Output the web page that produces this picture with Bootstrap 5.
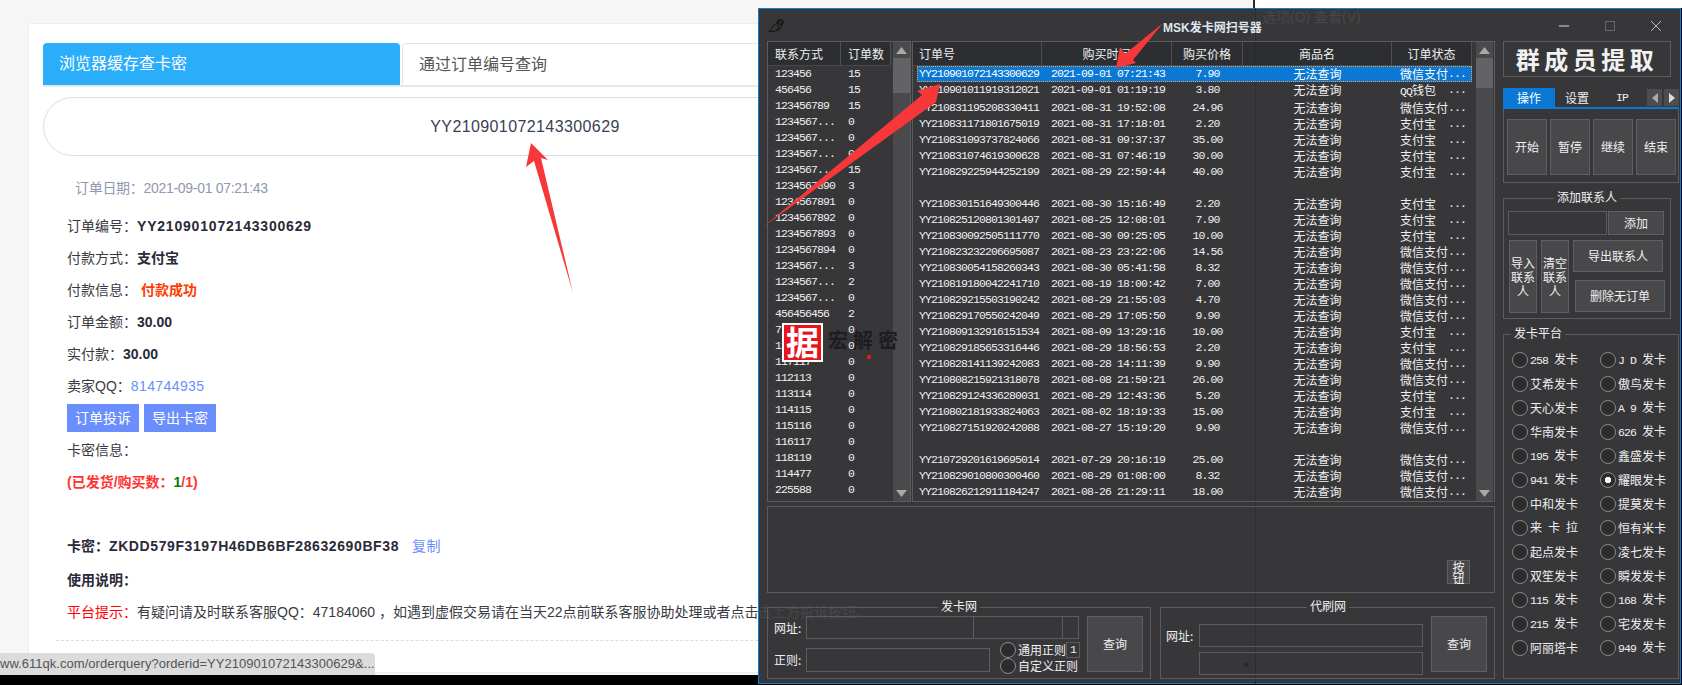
<!DOCTYPE html>
<html lang="zh-CN">
<head>
    <meta charset="UTF-8">
    <title>MSK发卡网扫号器</title>
    <link href="https://cdn.jsdelivr.net/npm/bootstrap@5.3.0/dist/css/bootstrap.min.css" rel="stylesheet">
    <style>
        html, body { margin: 0; height: 685px; overflow: hidden; background: #000; }
        .desk { position: relative; width: 1682px; height: 685px; display: flex; overflow: hidden; }

        /* browser page on the left */
        .web { position: relative; width: 758px; height: 675px; flex: none; overflow: hidden; background: #f6f6f6;
               font: 14px "Liberation Sans", "Noto Sans CJK SC", sans-serif; color: #3a3a44; }
        .web-card { width: 1100px; height: 650px; margin: 23px 0 0 28px; padding: 19px 14px 0; background: #fff;
                    border: 1px solid #eee; border-radius: 4px 0 0 0; }
        .web-tab { height: 42px; line-height: 42px; font-size: 16px; padding-left: 16px; border-radius: 4px 4px 0 0; }
        .web-tab-on { width: 357px; background: #2baefa; color: #fff; }
        .web-tab-off { flex: 1; background: #fff; color: #555; border: 1px solid #e4e4e8; border-bottom: 0; }
        .web-tabs { gap: 2px; border-bottom: 2px solid #e6e8ee; margin-right: 100px; }
        .order-input { width: 964px; height: 59px; margin-top: 10px; padding-top: 6px; border: 1px solid #dcdcec; border-radius: 30px;
                       font-size: 16px; letter-spacing: .4px; color: #3a3f55; }
        .web-date { line-height: 32px; margin: 16px 0 6px 32px; color: #9097b0; letter-spacing: -.3px; }
        .web-row { line-height: 32px; margin-left: 24px; white-space: nowrap; }
        .web-row b { color: #2a2a38; }
        .spaced { letter-spacing: .8px; }
        .qq-num { color: #6a8efc; letter-spacing: .4px; }
        .web-row b.paid { color: #ff3c00; margin-left: 4px; }
        .web-row b.sent { color: #f33; }
        .sent i { font-style: normal; color: #0a7a0a; }
        .hint-red { color: #f00; }
        .key-txt { letter-spacing: .6px; }
        .copy-link { margin-left: 13px; }
        .act-row { line-height: normal; height: 28px; margin-top: 2px; margin-bottom: 2px; }
        .act-btn { height: 28px; width: 72px; padding: 0; margin-right: 1px; font-size: 14px; line-height: 28px; color: #fff; background: #6a8efc; border: 0; border-radius: 0; }
        .web-gap { height: 32px; }
        .web-row-gap { margin-top: 2px; }
        .web-dash { border-top: 1px dashed #ddd; margin: 12px 0 0 13px; }
        .status-tip { position: absolute; left: 0; bottom: 0; width: 375px; height: 22px; line-height: 22px; font-size: 13px; letter-spacing: .03px;
                      color: #555; background: #dcdcdc; border-radius: 0 4px 0 0; white-space: nowrap; overflow: hidden; }

        /* right side of the desktop */
        .back { flex: 1; display: flex; flex-direction: column; }
        .back-top { height: 8px; display: flex; flex: none; }
        .back-top div:first-child { width: 497px; background: #f6f6f6; border-right: 2px solid #2d2d2f; }
        .back-top div:last-child { flex: 1; background: #fff; }

        /* scanner window */
        .win { width: 923px; height: 676px; background: #37373a; border: 1px solid #0b7fd4;
               font: 12px/14px "Noto Sans CJK SC", "Liberation Sans", sans-serif; color: #f0f0f0; }
        .lat { font-family: "Liberation Mono", monospace; font-size: 11.5px; letter-spacing: -.9px; }
        .win-title, .win-body { position: relative; z-index: 2; }
        .win-title { height: 32px; padding-left: 9px; }
        .win-name { margin-left: 378px; font-weight: 700; font-family: "Liberation Sans", "Noto Sans CJK SC", sans-serif; color: #dfe6ee; padding-top: 5px; }
        .win-ctl { margin-left: auto; padding-right: 19px; gap: 36px; padding-top: 2px; }
        .win-body { padding-left: 8px; gap: 8px; }
        .win-left { width: 728px; flex: none; }
        .win-right { width: 176px; flex: none; }

        .grid-box { height: 461px; gap: 1px; }
        .lst { border: 1px solid #5c5c5e; height: 461px; overflow: hidden; }
        .lst-a { width: 144px; flex: none; }
        .lst-b { flex: 1; }
        .cols { display: grid; line-height: 16px; white-space: nowrap; }
        .cols-a { grid-template-columns: 73px 50px; }
        .cols-a > span { padding-left: 7px; }
        .cols-b { grid-template-columns: 125px 130px 71px 149px 80px; margin-left: 4px; }
        .hdr { height: 24px; line-height: 23px; background: rgba(38, 40, 43, .6); border-bottom: 1px solid #47474a; }
        .hdr > span { border-right: 1px solid #4f4f52; }
        .lst-hdr-b { grid-template-columns: 129px 130px 71px 149px 80px; }
        .lst-hdr-b > span:first-child { padding-left: 6px; }
        .sel-row { background: #0a78d4; outline: 1px dotted #f0a040; outline-offset: -1px; color: #fff; }
        .c-id { padding-left: 2px; }
        .c-date { padding-left: 9px; }
        .c-mid { text-align: center; }
        .c-pay { padding-left: 8px; display: flex; }
        .c-pay span:first-child { width: 48px; flex: none; }
        .sb { width: 17px; flex: none; height: 459px; background: #4a4a4d; }
        .sb svg { display: block; margin: 5px auto 4px; }
        .sb-thumb { height: 35px; background: #636366; }
        .sb-thumb-b { height: 30px; }
        .sb-gap-a { margin-left: 2px; }
        .sb-gap-b { margin-left: 4px; margin-right: 1px; }
        .sb svg.sb-down { margin: auto auto 4px; }

        .log-box { height: 87px; margin-top: 4px; border: 1px solid #5c5c5e; padding: 0 24px 8px 0; }
        .wbtn { padding: 0; font-size: 12px; line-height: 14px; color: #f0f0f0; background: #48484b; border: 1px solid #5f5f62; border-radius: 0; }
        .wbtn:hover { color: #fff; background: #48484b; border-color: #5f5f62; }
        .log-btn { width: 23px; height: 24px; line-height: 11px; }
        .grp { position: relative; border: 1px solid #5c5c5e; }
        .grp-name { position: absolute; top: -9px; padding: 0 3px; background: #37373a; line-height: 14px; transform: translateX(-50%); white-space: nowrap; }
        .grp-row { margin-top: 14px; gap: 9px; }
        .grp-card { width: 384px; height: 72px; padding: 8px 7px 0 6px; }
        .grp-card .grp-name { left: 191px; }
        .card-fields { min-width: 0; }
        .grp-pay { flex: 1; height: 72px; padding: 8px 7px 0 5px; }
        .grp-pay .grp-name { left: 167px; }
        .w-inp { height: 23px; background: transparent; border: 1px solid #5c5c5e; }
        .lbl { width: 32px; flex: none; }
        .q-btn { width: 56px; height: 56px; flex: none; margin-left: 8px; }
        .rdo { width: 16px; height: 16px; flex: none; border-radius: 50%; border: 1px solid #8a8a8a; background: #2c2c2e; }
        .rdo-on { background: radial-gradient(circle, #f4f4f4 0 3px, #2c2c2e 3.5px); }
        .rdo-line { height: 16px; gap: 2px; white-space: nowrap; }
        .num-box { width: 14px; height: 16px; margin-left: -2px; line-height: 14px; border: 1px solid #5c5c5e; text-align: center; }
        .w-drop { position: relative; }
        .w-drop svg { position: absolute; right: 172px; top: 10px; }
        .card-a { width: 168px; }
        .card-b { width: 90px; margin-left: -1px; }
        .card-c { width: 17px; margin-left: -1px; }
        .reg-row { margin-top: 9px; }
        .reg-lbl { line-height: 24px; }
        .reg-inp { width: 184px; height: 24px; flex: none; }
        .reg-opts { margin: -6px 0 0 10px; }
        .pay-fields { padding-top: 8px; }
        .pay-lbl { width: 33px; }
        .pay-sel { margin-top: 5px; }

        .banner { width: 168px; height: 36px; border: 1px solid #5c5c5e; line-height: 33px; text-align: center; font-size: 24px; font-weight: 700; letter-spacing: 4.5px; color: #f2f2f2; }
        .rtabs { height: 21px; margin-top: 11px; border-bottom: 2px solid #0a78d4; }
        .rtab { width: 52px; line-height: 19px; text-align: center; }
        .rtab-on { background: #0a78d4; color: #fff; }
        .rtab-plain { width: 44px; }
        .rtab-ip { width: 46px; }
        .rarrow { width: 15px; height: 17px; margin: 1px 0 0 2px; background: #4d4d50; }
        .rpane { height: 74px; padding: 10px 2px 0 3px; border: 1px solid #5c5c5e; border-top: 0; gap: 3px; }
        .rpane .wbtn { width: 40px; height: 56px; }
        .grp-add { width: 168px; height: 121px; margin-top: 15px; padding: 12px 0 0 4px; }
        .grp-add .grp-name { left: 83px; }
        .add-inp { width: 99px; height: 24px; }
        .add-btn { width: 56px; height: 24px; margin-left: 1px; }
        .add-tools { margin: 5px 0 0 1px; }
        .tall-btn { width: 28px; height: 73px; margin-right: 4px; }
        .wide-btn { width: 90px; height: 32px; }
        .del-btn { margin: 8px 0 0 2px; }
        .grp-plat { height: 345px; margin-top: 15px; padding: 13px 0 0 8px; }
        .grp-plat .grp-name { left: 7px; transform: none; }
        .plat-grid { display: grid; grid-template-columns: 88px 88px; grid-auto-rows: 24px; align-items: center; }

        /* things seen through the translucent window, and the marks drawn over the shot */
        .ghost { position: absolute; z-index: 1; color: #474749; white-space: nowrap; font: 14px "Liberation Sans", "Noto Sans CJK SC", sans-serif; line-height: 16px; }
        .ghost-line { position: absolute; z-index: 1; left: 1255px; top: 8px; width: 1px; height: 676px; background: #2d2d2f; }
        .marks { position: absolute; left: 0; top: 0; z-index: 5; pointer-events: none; }
        .seal { position: absolute; z-index: 4; left: 782px; top: 323px; width: 41px; height: 39px; background: #e8141c; border: 2px solid #fff; color: #fff;
                font: 700 33px/33px "Noto Sans CJK SC", sans-serif; text-align: center; overflow: hidden; }
        .seal-name { position: absolute; z-index: 4; left: 828px; top: 328px; font: 700 20px/24px "Noto Sans CJK SC", sans-serif; letter-spacing: 5px; color: #1d1d1f; white-space: nowrap; }
        .seal-dot { position: absolute; z-index: 4; left: 867px; top: 355px; width: 4px; height: 4px; background: #e8141c; }
    </style>
</head>
<body>
<div class="desk" id="desk">

    <div class="web">
        <div class="web-card">
            <div class="d-flex web-tabs">
                <div class="web-tab web-tab-on">浏览器缓存查卡密</div>
                <div class="web-tab web-tab-off">通过订单编号查询</div>
            </div>
            <input class="form-control text-center order-input" type="text" value="YY210901072143300629">
            <div class="web-date">订单日期：2021-09-01 07:21:43</div>
            <div class="web-row">订单编号：<b class="spaced">YY210901072143300629</b></div>
            <div class="web-row">付款方式：<b>支付宝</b></div>
            <div class="web-row">付款信息：<b class="paid">付款成功</b></div>
            <div class="web-row">订单金额：<b>30.00</b></div>
            <div class="web-row">实付款：<b>30.00</b></div>
            <div class="web-row">卖家QQ：<span class="qq-num">814744935</span></div>
            <div class="web-row d-flex gap-1 act-row">
                <button class="btn act-btn" type="button">订单投诉</button>
                <button class="btn act-btn" type="button">导出卡密</button>
            </div>
            <div class="web-row">卡密信息：</div>
            <div class="web-row"><b class="sent">(已发货/购买数：<i>1</i>/1)</b></div>
            <div class="web-gap"></div>
            <div class="web-row"><b>卡密：<span class="key-txt">ZKDD579F3197H46DB6BF28632690BF38</span></b><a class="qq-num text-decoration-none copy-link" href="#">复制</a></div>
            <div class="web-row web-row-gap"><b>使用说明：</b></div>
            <div class="web-row"><span class="hint-red">平台提示：</span>有疑问请及时联系客服QQ：47184060 ，如遇到虚假交易请在当天22点前联系客服协助处理或者点击上方投诉按钮。</div>
            <div class="web-dash"></div>
        </div>
        <div class="status-tip">ww.611qk.com/orderquery?orderid=YY210901072143300629&amp;...</div>
    </div>

    <div class="back">
        <div class="back-top"><div></div><div></div></div>
        <div class="win">
            <div class="win-title d-flex align-items-center">
                <svg width="17" height="15" viewBox="0 0 17 15" fill="none" stroke="#111" stroke-width="1"><path d="M1 14 L6 7 L9 5 M1 14 L7 13 L12 11 L14 7 L13 3 L10 2 L9 5 L11 9 L8 13"/><circle cx="13" cy="4" r="2.5"/></svg>
                <div class="win-name">MSK发卡网扫号器</div>
                <div class="win-ctl d-flex align-items-center">
                    <svg width="10" height="10" viewBox="0 0 10 10"><path d="M0 5 H10" stroke="#ddd"/></svg>
                    <svg width="10" height="10" viewBox="0 0 10 10"><rect x=".5" y=".5" width="9" height="9" fill="none" stroke="#68686b"/></svg>
                    <svg width="10" height="10" viewBox="0 0 10 10"><path d="M0 0 L10 10 M10 0 L0 10" stroke="#bbb"/></svg>
                </div>
            </div>

            <div class="win-body d-flex">
                <div class="win-left">
                    <div class="grid-box d-flex">
                        <div class="lst lst-a d-flex">
                            <div class="flex-grow-1">
                                <div class="cols cols-a hdr"><span>联系方式</span><span>订单数</span></div>
                                <div id="contactRows"></div>
                            </div>
                            <div class="sb sb-gap-a d-flex flex-column">
                                <svg width="11" height="7" viewBox="0 0 11 7"><path d="M5.5 0 L11 7 H0 Z" fill="#a8a8a8"/></svg>
                                <div class="sb-thumb"></div>
                                <svg class="sb-down" width="11" height="7" viewBox="0 0 11 7"><path d="M0 0 H11 L5.5 7 Z" fill="#a8a8a8"/></svg>
                            </div>
                        </div>
                        <div class="lst lst-b d-flex">
                            <div class="flex-grow-1">
                                <div class="cols lst-hdr-b hdr">
                                    <span>订单号</span><span class="c-mid">购买时间</span><span class="c-mid">购买价格</span><span class="c-mid">商品名</span><span class="c-mid">订单状态</span>
                                </div>
                                <div id="orderRows"></div>
                            </div>
                            <div class="sb sb-gap-b d-flex flex-column">
                                <svg width="11" height="7" viewBox="0 0 11 7"><path d="M5.5 0 L11 7 H0 Z" fill="#a8a8a8"/></svg>
                                <div class="sb-thumb sb-thumb-b"></div>
                                <svg class="sb-down" width="11" height="7" viewBox="0 0 11 7"><path d="M0 0 H11 L5.5 7 Z" fill="#a8a8a8"/></svg>
                            </div>
                        </div>
                    </div>

                    <div class="log-box d-flex justify-content-end align-items-end">
                        <button class="btn wbtn log-btn" type="button">按钮</button>
                    </div>

                    <div class="grp-row d-flex">
                        <div class="grp grp-card d-flex">
                            <div class="grp-name">发卡网</div>
                            <div class="flex-grow-1 card-fields">
                                <div class="d-flex align-items-center">
                                    <span class="lbl">网址:</span>
                                    <div class="w-inp card-a"></div><div class="w-inp card-b"></div><div class="w-inp card-c"></div>
                                </div>
                                <div class="d-flex reg-row">
                                    <span class="lbl reg-lbl">正则:</span>
                                    <div class="w-inp reg-inp"></div>
                                    <div class="reg-opts">
                                        <div class="rdo-line d-flex align-items-center"><span class="rdo"></span><span>通用正则</span><span class="num-box lat">1</span></div>
                                        <div class="rdo-line d-flex align-items-center"><span class="rdo"></span><span>自定义正则</span></div>
                                    </div>
                                </div>
                            </div>
                            <button class="btn wbtn q-btn" type="button">查询</button>
                        </div>
                        <div class="grp grp-pay d-flex">
                            <div class="grp-name">代刷网</div>
                            <div class="flex-grow-1 pay-fields">
                                <div class="d-flex align-items-center">
                                    <span class="lbl pay-lbl">网址:</span>
                                    <div class="w-inp flex-grow-1"></div>
                                </div>
                                <div class="d-flex pay-sel">
                                    <span class="lbl pay-lbl"></span>
                                    <div class="w-inp w-drop flex-grow-1"><svg width="7" height="5" viewBox="0 0 7 5"><path d="M0 0 H7 L3.5 5 Z" fill="#2b2b2d"/></svg></div>
                                </div>
                            </div>
                            <button class="btn wbtn q-btn" type="button">查询</button>
                        </div>
                    </div>
                </div>

                <div class="win-right">
                    <div class="banner">群成员提取</div>
                    <div class="rtabs d-flex">
                        <div class="rtab rtab-on">操作</div>
                        <div class="rtab rtab-plain">设置</div>
                        <div class="rtab rtab-ip lat">IP</div>
                        <div class="rarrow d-flex align-items-center justify-content-center"><svg width="6" height="10" viewBox="0 0 6 10"><path d="M6 0 V10 L0 5 Z" fill="#aaa"/></svg></div>
                        <div class="rarrow d-flex align-items-center justify-content-center"><svg width="6" height="10" viewBox="0 0 6 10"><path d="M0 0 V10 L6 5 Z" fill="#ddd"/></svg></div>
                    </div>
                    <div class="rpane d-flex">
                        <button class="btn wbtn" type="button">开始</button>
                        <button class="btn wbtn" type="button">暂停</button>
                        <button class="btn wbtn" type="button">继续</button>
                        <button class="btn wbtn" type="button">结束</button>
                    </div>
                    <div class="grp grp-add">
                        <div class="grp-name">添加联系人</div>
                        <div class="d-flex">
                            <div class="w-inp add-inp"></div>
                            <button class="btn wbtn add-btn" type="button">添加</button>
                        </div>
                        <div class="d-flex add-tools">
                            <button class="btn wbtn tall-btn" type="button">导入联系人</button>
                            <button class="btn wbtn tall-btn" type="button">清空联系人</button>
                            <div>
                                <button class="btn wbtn wide-btn d-block" type="button">导出联系人</button>
                                <button class="btn wbtn wide-btn d-block del-btn" type="button">删除无订单</button>
                            </div>
                        </div>
                    </div>
                    <div class="grp grp-plat">
                        <div class="grp-name">发卡平台</div>
                        <div class="plat-grid" id="platGrid"></div>
                    </div>
                </div>
            </div>
        </div>
    </div>

    <div class="ghost-line"></div>
    <div class="seal">据</div>
    <div class="seal-name">宏解密</div>
    <div class="seal-dot"></div>

    <svg class="marks" width="1682" height="685" viewBox="0 0 1682 685">
        <polygon fill="#f8373a" points="531,143 526,167 534,161 573,293 541,158 548,160"/>
        <polygon fill="#f8373a" points="1116,68 1120,48 1125,54 1163,23 1133,60 1136,63"/>
        <polygon fill="#f8373a" points="940,84 917,91 922,95 763,227 932,105 936,102"/>
    </svg>
</div>

<script>
    const contacts = [
        ['123456', 15], ['456456', 15], ['123456789', 15], ['1234567...', 0], ['1234567...', 0], ['1234567...', 0],
        ['1234567...', 15], ['1234567890', 3], ['1234567891', 0], ['1234567892', 0], ['1234567893', 0], ['1234567894', 0],
        ['1234567...', 3], ['1234567...', 2], ['1234567...', 0], ['456456456', 2], ['778899', 0], ['110110', 0],
        ['117117', 0], ['112113', 0], ['113114', 0], ['114115', 0], ['115116', 0], ['116117', 0],
        ['118119', 0], ['114477', 0], ['225588', 0]
    ];
    const WX = '微信支付', ZFB = '支付宝', QQ = 'QQ钱包';
    const orders = [
        ['YY210901072143300629', '2021-09-01 07:21:43', '7.90', WX],
        ['YY210901011919312021', '2021-09-01 01:19:19', '3.80', QQ],
        ['YY210831195208330411', '2021-08-31 19:52:08', '24.96', WX],
        ['YY210831171801675019', '2021-08-31 17:18:01', '2.20', ZFB],
        ['YY210831093737824066', '2021-08-31 09:37:37', '35.00', ZFB],
        ['YY210831074619300628', '2021-08-31 07:46:19', '30.00', ZFB],
        ['YY210829225944252199', '2021-08-29 22:59:44', '40.00', ZFB],
        null,
        ['YY210830151649300446', '2021-08-30 15:16:49', '2.20', ZFB],
        ['YY210825120801301497', '2021-08-25 12:08:01', '7.90', ZFB],
        ['YY210830092505111770', '2021-08-30 09:25:05', '10.00', ZFB],
        ['YY210823232206695087', '2021-08-23 23:22:06', '14.56', WX],
        ['YY210830054158260343', '2021-08-30 05:41:58', '8.32', WX],
        ['YY210819180042241710', '2021-08-19 18:00:42', '7.00', WX],
        ['YY210829215503190242', '2021-08-29 21:55:03', '4.70', WX],
        ['YY210829170550242049', '2021-08-29 17:05:50', '9.90', WX],
        ['YY210809132916151534', '2021-08-09 13:29:16', '10.00', ZFB],
        ['YY210829185653316446', '2021-08-29 18:56:53', '2.20', ZFB],
        ['YY210828141139242083', '2021-08-28 14:11:39', '9.90', WX],
        ['YY210808215921318078', '2021-08-08 21:59:21', '26.00', WX],
        ['YY210829124336280031', '2021-08-29 12:43:36', '5.20', ZFB],
        ['YY210802181933824063', '2021-08-02 18:19:33', '15.00', ZFB],
        ['YY210827151920242088', '2021-08-27 15:19:20', '9.90', WX],
        null,
        ['YY210729201619695014', '2021-07-29 20:16:19', '25.00', WX],
        ['YY210829010800300460', '2021-08-29 01:08:00', '8.32', WX],
        ['YY210826212911184247', '2021-08-26 21:29:11', '18.00', WX]
    ];
    const platforms = [
        '258 发卡', 'J D 发卡', '艾希发卡', '傲鸟发卡', '天心发卡', 'A 9 发卡', '华南发卡', '626 发卡',
        '195 发卡', '鑫盛发卡', '941 发卡', '耀眼发卡', '中和发卡', '提莫发卡', '来 卡 拉', '恒有米卡',
        '起点发卡', '凌七发卡', '双笙发卡', '瞬发发卡', '115 发卡', '168 发卡', '215 发卡', '宅发发卡',
        '阿丽塔卡', '949 发卡'
    ];
    // text of the window behind, showing through in gaps of this one
    const ghosts = [
        [1262, 9, '选项(O)   查看(V)'],
        [758, 604, '击上方投诉按钮。']
    ];

    // ascii runs in the window's lists use the half width mono font
    function lat(text) {
        return text.replace(/[\x20-\x7e]+/g, m => `<span class="lat">${m}</span>`);
    }

    document.getElementById('contactRows').innerHTML = contacts
        .map(([name, count]) => `<div class="cols cols-a"><span class="lat">${name}</span><span class="lat">${count}</span></div>`)
        .join('');

    const orderRow = (o, i) => {
        if (!o) return '<div class="cols cols-b">&nbsp;</div>';
        return `<div class="cols cols-b ${i === 0 ? 'sel-row' : ''}">
            <span class="c-id lat">${o[0]}</span>
            <span class="c-date lat">${o[1].replace(' ', '&nbsp;')}</span>
            <span class="c-mid lat">${o[2]}</span>
            <span class="c-mid">无法查询</span>
            <span class="c-pay"><span>${lat(o[3])}</span><span class="lat">...</span></span>
        </div>`;
    };
    document.getElementById('orderRows').innerHTML = orders.map(orderRow).join('') +
        '<div class="cols cols-b"><span></span><span></span><span></span><span class="c-mid">无法查询</span><span class="c-pay"><span>微信支付</span><span class="lat">...</span></span></div>';

    document.getElementById('platGrid').innerHTML = platforms
        .map(p => `<div class="rdo-line d-flex align-items-center"><span class="rdo ${p === '耀眼发卡' ? 'rdo-on' : ''}"></span><span class="plat-name">${lat(p)}</span></div>`)
        .join('');

    const desk = document.getElementById('desk');
    ghosts.forEach(([x, y, text]) => {
        const el = document.createElement('div');
        el.className = 'ghost';
        el.setAttribute('aria-hidden', 'true');
        el.style.left = x + 'px';
        el.style.top = y + 'px';
        el.textContent = text;
        desk.appendChild(el);
    });
</script>
<script src="https://cdn.jsdelivr.net/npm/bootstrap@5.3.0/dist/js/bootstrap.bundle.min.js"></script>
</body>
</html>
